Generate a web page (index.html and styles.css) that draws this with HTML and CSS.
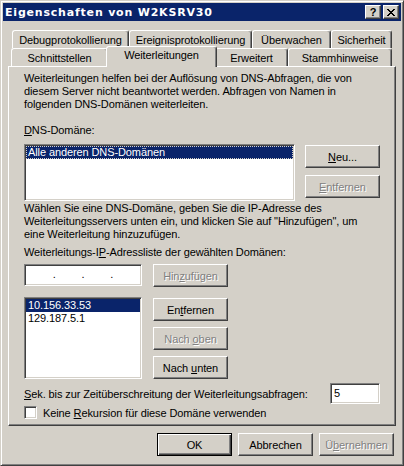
FILE: index.html
```html
<!DOCTYPE html>
<html lang="de">

<head>
    <meta charset="UTF-8">
    <meta name="viewport" content="width=device-width, initial-scale=1.0">
    <title>Eigenschaften von W2KSRV30</title>
    <link rel="stylesheet" href="styles.css">
</head>

<body>

    <div class="fenster">
        <div class="titel">
            <span class="titel-text">Eigenschaften von W2KSRV30</span>
            <div class="titel-knoepfe">
                <button class="titel-knopf titel-hilfe">?</button>
                <button class="titel-knopf">
                    <svg width="8" height="7" viewBox="0 0 8 7">
                        <path d="M0 0h2v1h-2z M6 0h2v1h-2z M1 1h2v1h-2z M5 1h2v1h-2z M2 2h4v1h-4z M3 3h2v1h-2z M2 4h4v1h-4z M1 5h2v1h-2z M5 5h2v1h-2z M0 6h2v1h-2z M6 6h2v1h-2z" fill="#000" />
                    </svg>
                </button>
            </div>
        </div>

        <div class="inhalt">
            <div class="reiter-zeile reiter-hinten">
                <div class="tab tab-debug">Debugprotokollierung</div>
                <div class="tab tab-ereignis">Ereignisprotokollierung</div>
                <div class="tab tab-ueberwachen">Überwachen</div>
                <div class="tab tab-sicherheit">Sicherheit</div>
            </div>
            <div class="reiter-zeile reiter-vorne">
                <div class="tab tab-schnitt">Schnittstellen</div>
                <div class="tab tab-weiter tab-aktiv">Weiterleitungen</div>
                <div class="tab tab-erweitert">Erweitert</div>
                <div class="tab tab-stamm">Stammhinweise</div>
            </div>

            <div class="seite">
                <p class="text">Weiterleitungen helfen bei der Auflösung von DNS-Abfragen, die von<br>
                    diesem Server nicht beantwortet werden. Abfragen von Namen in<br>
                    folgenden DNS-Domänen weiterleiten.</p>

                <div class="beschriftung abstand-dns"><u>D</u>NS-Domäne:</div>

                <div class="zeile-dns">
                    <div class="liste liste-dns">
                        <div class="eintrag eintrag-fokus">Alle anderen DNS-Domänen</div>
                    </div>
                    <div class="knopf-spalte knopf-spalte-dns">
                        <button class="knopf"><u>N</u>eu...</button>
                        <button class="knopf knopf-aus"><u>E</u>ntfernen</button>
                    </div>
                </div>

                <p class="text text-hinweis">Wählen Sie eine DNS-Domäne, geben Sie die IP-Adresse des<br>
                    Weiterleitungsservers unten ein, und klicken Sie auf "Hinzufügen", um<br>
                    eine Weiterleitung hinzuzufügen.</p>

                <div class="beschriftung abstand-ip">Weiterleitungs-I<u>P</u>-Adressliste der gewählten Domänen:</div>

                <div class="zeile-ip">
                    <div class="ip-feld">
                        <span></span><span class="punkt">.</span>
                        <span></span><span class="punkt">.</span>
                        <span></span><span class="punkt">.</span>
                        <span></span>
                    </div>
                    <button class="knopf knopf-aus">Hin<u>z</u>ufügen</button>
                </div>

                <div class="zeile-liste">
                    <div class="liste liste-ip">
                        <div class="eintrag eintrag-aktiv">10.156.33.53</div>
                        <div class="eintrag">129.187.5.1</div>
                    </div>
                    <div class="knopf-spalte knopf-spalte-ip">
                        <button class="knopf">En<u>t</u>fernen</button>
                        <button class="knopf knopf-aus">Nach <u>o</u>ben</button>
                        <button class="knopf">Nach <u>u</u>nten</button>
                    </div>
                </div>

                <div class="zeile-sek">
                    <span><u>S</u>ek. bis zur Zeitüberschreitung der Weiterleitungsabfragen:</span>
                    <div class="zahl-feld">5</div>
                </div>

                <div class="zeile-check">
                    <span class="kasten"></span>
                    <span>Keine <u>R</u>ekursion für diese Domäne verwenden</span>
                </div>
            </div>

            <div class="fuss">
                <button class="knopf knopf-standard">OK</button>
                <button class="knopf">Abbrechen</button>
                <button class="knopf knopf-aus">Ü<u>b</u>ernehmen</button>
            </div>
        </div>
    </div>

</body>

</html>
```

FILE: styles.css
```css
* {
    box-sizing: border-box;
}

body {
    margin: 0;
    background-color: #d4d0c8;
    font-family: "Liberation Sans", Arial, sans-serif;
    font-size: 11px;
    color: #000;
}

u {
    text-decoration: underline;
    text-underline-offset: 1px;
}

/* fenster rahmen */
.fenster {
    width: 404px;
    height: 466px;
    background-color: #d4d0c8;
    border: 1px solid;
    border-color: #d4d0c8 #404040 #404040 #d4d0c8;
    box-shadow: inset 1px 1px #fff, inset -1px -1px #808080;
    padding: 2px;
    display: flex;
    flex-direction: column;
}

.titel {
    height: 18px;
    background-color: #0a246a;
    color: #fff;
    display: flex;
    align-items: center;
    justify-content: space-between;
    padding: 0 2px 0 2px;
}

.titel-text {
    font-family: "DejaVu Sans", Verdana, sans-serif;
    font-weight: bold;
    letter-spacing: 0.8px;
}

.titel-knoepfe {
    display: flex;
    gap: 2px;
}

.titel-knopf {
    width: 16px;
    height: 14px;
    padding: 0;
    background-color: #d4d0c8;
    border: 1px solid;
    border-color: #fff #404040 #404040 #fff;
    box-shadow: inset -1px -1px #808080;
    display: flex;
    align-items: center;
    justify-content: center;
}

.titel-hilfe {
    font-family: "Liberation Sans", Arial, sans-serif;
    font-weight: bold;
    font-size: 11px;
    line-height: 11px;
    color: #000;
}

.inhalt {
    flex: 1;
    display: flex;
    flex-direction: column;
    padding: 9px 5px 0;
}

/* reiter */
.reiter-zeile {
    display: flex;
    align-items: flex-start;
    height: 18px;
}

.reiter-hinten {
    margin-left: 4px;
}

.reiter-vorne {
    margin-left: 3px;
}

.tab {
    height: 18px;
    border: 1px solid;
    border-bottom: 0;
    border-color: #fff #404040 transparent #fff;
    border-radius: 3px 3px 0 0;
    box-shadow: inset -1px 0 #808080;
    text-align: center;
    line-height: 13px;
    padding-top: 3px;
    white-space: nowrap;
    letter-spacing: -0.1px;
}

.tab-debug { width: 117px; }
.tab-ereignis { width: 123px; }
.tab-ueberwachen { width: 79px; }
.tab-sicherheit { width: 61px; }
.tab-schnitt { width: 97px; }
.tab-weiter { width: 107px; }
.tab-erweitert { width: 73px; }
.tab-stamm { width: 104px; }

.tab-aktiv {
    position: relative;
    z-index: 1;
    width: 111px;
    height: 21px;
    margin: -2px -2px -1px;
    padding-top: 2px;
    background-color: #d4d0c8;
}

/* seite */
.seite {
    height: 360px;
    border: 1px solid;
    border-color: #fff #404040 #404040 #fff;
    box-shadow: inset -1px -1px #808080;
    padding: 5px 15px 0;
}

.text {
    margin: 0;
    line-height: 13px;
    letter-spacing: -0.1px;
    white-space: nowrap;
}

.beschriftung {
    line-height: 13px;
    letter-spacing: -0.1px;
}

.abstand-dns {
    margin-top: 13px;
}

.text-hinweis {
    margin-top: 1px;
}

.abstand-ip {
    margin-top: 5px;
}

.zeile-dns {
    display: flex;
    gap: 10px;
    margin-top: 7px;
}

.liste {
    background-color: #fff;
    border: 1px solid;
    border-color: #808080 #fff #fff #808080;
    box-shadow: inset 1px 1px #404040, inset -1px -1px #d4d0c8;
    padding: 1px;
}

.liste-dns {
    flex: 1;
    height: 57px;
}

.liste-ip {
    width: 118px;
    height: 82px;
}

.eintrag {
    height: 13px;
    line-height: 13px;
    padding-left: 2px;
    letter-spacing: -0.1px;
}

.eintrag-aktiv,
.eintrag-fokus {
    background-color: #0a246a;
    color: #fff;
}

.eintrag-fokus {
    outline: 1px dotted #d4d0c8;
    outline-offset: -1px;
}

.knopf-spalte {
    display: flex;
    flex-direction: column;
    padding-top: 1px;
}

.knopf-spalte-dns {
    gap: 7px;
}

.knopf-spalte-ip {
    gap: 6px;
}

.knopf {
    width: 75px;
    height: 23px;
    padding: 0;
    font: inherit;
    letter-spacing: -0.1px;
    color: #000;
    background-color: #d4d0c8;
    border: 1px solid;
    border-color: #fff #404040 #404040 #fff;
    box-shadow: inset -1px -1px #808080;
    text-align: center;
}

.knopf-aus {
    color: #808080;
    text-shadow: 1px 1px 0 #fff;
}

.knopf-standard {
    border-color: #000;
    box-shadow: inset 1px 1px #fff, inset -1px -1px #404040, inset -2px -2px #808080;
}

.zeile-ip {
    display: flex;
    align-items: flex-start;
    gap: 11px;
    margin-top: 5px;
}

.ip-feld {
    width: 118px;
    height: 22px;
    background-color: #fff;
    border: 1px solid;
    border-color: #808080 #fff #fff #808080;
    box-shadow: inset 1px 1px #404040, inset -1px -1px #d4d0c8;
    display: grid;
    grid-template-columns: 1fr auto 1fr auto 1fr auto 1fr;
    align-items: center;
    padding: 0 2px 2px;
}

.punkt {
    line-height: 13px;
}

.zeile-liste {
    display: flex;
    gap: 11px;
    margin-top: 10px;
}

.zeile-sek {
    display: flex;
    align-items: center;
    justify-content: space-between;
    margin-top: 4px;
    letter-spacing: -0.1px;
}

.zahl-feld {
    width: 50px;
    height: 21px;
    background-color: #fff;
    border: 1px solid;
    border-color: #808080 #fff #fff #808080;
    box-shadow: inset 1px 1px #404040, inset -1px -1px #d4d0c8;
    padding: 3px 3px 0;
    line-height: 13px;
}

.zeile-check {
    display: flex;
    align-items: center;
    gap: 6px;
    margin-top: 2px;
    letter-spacing: -0.1px;
}

.kasten {
    width: 13px;
    height: 13px;
    background-color: #fff;
    border: 1px solid;
    border-color: #808080 #fff #fff #808080;
    box-shadow: inset 1px 1px #404040, inset -1px -1px #d4d0c8;
}

.fuss {
    display: flex;
    justify-content: flex-end;
    gap: 6px;
    margin-top: 7px;
    padding-right: 2px;
}
```
